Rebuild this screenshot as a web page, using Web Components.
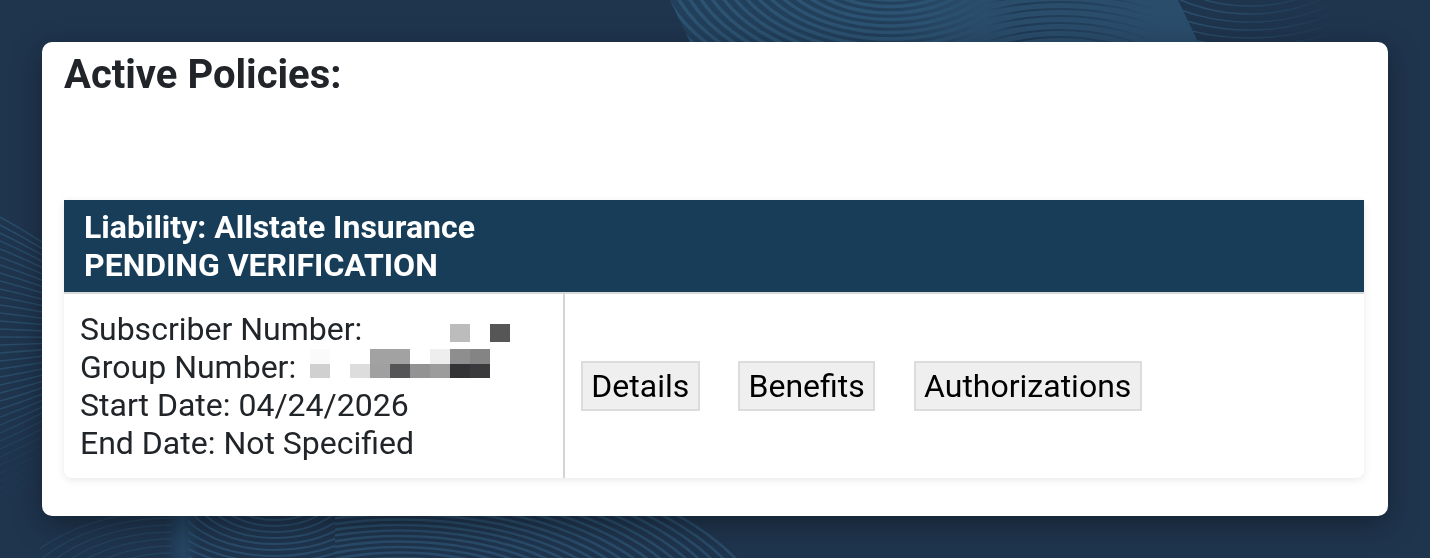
<!DOCTYPE html>
<html lang="en">
<head>
<meta charset="utf-8">
<title>Active Policies</title>
<style>
  html, body { margin: 0; height: 100%; }
  body {
    background: #1f354e;
    font-family: Roboto, "Liberation Sans", sans-serif;
    color: #212529;
    overflow: hidden;
  }
</style>
</head>
<body>
<wave-backdrop></wave-backdrop>
<policy-panel heading="Active Policies:">
  <policy-card>
    <span slot="title">Liability: Allstate Insurance</span>
    <span slot="status">PENDING VERIFICATION</span>
    <div slot="info">Subscriber Number:<pixel-mask class="sub"></pixel-mask></div>
    <div slot="info">Group Number:<pixel-mask class="grp"></pixel-mask></div>
    <div slot="info">Start Date: 04/24/2026</div>
    <div slot="info">End Date: Not Specified</div>
    <action-button slot="actions">Details</action-button>
    <action-button slot="actions">Benefits</action-button>
    <action-button slot="actions">Authorizations</action-button>
  </policy-card>
</policy-panel>

<script>
// --- background: line waves behind the panel ---
class WaveBackdrop extends HTMLElement {
  constructor() {
    super();
    this.attachShadow({ mode: 'open' });
  }

  connectedCallback() {
    this._render();
  }

  // concentric ellipses, k stretches them sideways
  _rings(cx, cy, k, from, to, step) {
    let d = '';
    for (let r = from; r <= to; r += step) {
      d += `M${cx - k * r} ${cy}A${k * r} ${r} 0 1 0 ${cx + k * r} ${cy}A${k * r} ${r} 0 1 0 ${cx - k * r} ${cy}`;
    }
    return d;
  }

  // the fan of lines that shows left of the panel
  _fan() {
    let out = '';
    for (let y0 = 217; y0 <= 500; y0 += 8) {
      const t = (y0 - 217) / 216;
      const slope = t <= 1 ? 0.6 - t * 1.07 : -0.47 - (t - 1) * 0.1;
      const o = y0 < 400 ? 0.75 : Math.max(0.12, 0.75 - (y0 - 400) / 120);
      out += `<path d="M0 ${y0}Q21 ${y0 + slope * 19} 42 ${y0 + slope * 42}" stroke="#2c5372" stroke-width="1.6" fill="none" opacity="${o}"/>`;
    }
    return out;
  }

  _render() {
    this.shadowRoot.innerHTML = `
      <style>
        :host { position: fixed; inset: 0; display: block; }
        svg { display: block; width: 100%; height: 100%; }
      </style>
      <svg viewBox="0 0 1430 558" preserveAspectRatio="none" aria-hidden="true">
        <defs>
          <clipPath id="c1"><path d="M670 0L985 0L985 42L690 42Z"/></clipPath>
          <clipPath id="c2"><path d="M985 0L1178 0L1198 42L985 42Z"/></clipPath>
          <clipPath id="c3"><path d="M1178 0L1330 0L1330 42L1198 42Z"/></clipPath>
          <clipPath id="c4"><path d="M188 516L335 516L335 558L188 558Z"/></clipPath>
          <clipPath id="c5"><path d="M335 516L708 516L745 558L335 558Z"/></clipPath>
          <clipPath id="c6"><path d="M40 516L172 516L172 558L40 558Z"/></clipPath>
          <linearGradient id="bowlTop" gradientUnits="userSpaceOnUse" x1="670" x2="985" y1="0" y2="0">
            <stop offset="0" stop-color="#2c5372"/><stop offset=".8" stop-color="#2c5372"/><stop offset="1" stop-color="#2a4d6c"/>
          </linearGradient>
          <linearGradient id="domeTop" gradientUnits="userSpaceOnUse" x1="985" x2="1160" y1="0" y2="0">
            <stop offset="0" stop-color="#1f3a55" stop-opacity="0"/><stop offset=".2" stop-color="#1f3a55"/><stop offset=".6" stop-color="#1f3a55" stop-opacity=".7"/><stop offset="1" stop-color="#1f3a55" stop-opacity="0"/>
          </linearGradient>
          <linearGradient id="fadeR" gradientUnits="userSpaceOnUse" x1="1175" x2="1330" y1="0" y2="0">
            <stop offset="0" stop-color="#2c5372"/><stop offset="1" stop-color="#2c5372" stop-opacity=".1"/>
          </linearGradient>
          <linearGradient id="fillBowl" gradientUnits="userSpaceOnUse" x1="880" x2="985" y1="0" y2="0">
            <stop offset="0" stop-color="#223f5b"/><stop offset="1" stop-color="#2a4d6c"/>
          </linearGradient>
          <linearGradient id="bandLow" x1="0" x2="1" y1="0" y2="0">
            <stop offset="0" stop-color="#264664" stop-opacity="0"/><stop offset=".5" stop-color="#264664"/><stop offset="1" stop-color="#264664" stop-opacity="0"/>
          </linearGradient>
        </defs>
        <path d="M670 0L985 0L985 42L690 42Z" fill="url(#fillBowl)"/>
        <path d="M985 0L1178 0L1198 42L985 42Z" fill="#2a4d6c"/>
        <g clip-path="url(#c1)" fill="none" stroke="url(#bowlTop)" stroke-width="3.4">
          <path d="${this._rings(890, -50, 1.6, 50, 190, 6.5)}"/>
        </g>
        <g clip-path="url(#c2)" fill="none" stroke="url(#domeTop)" stroke-width="2">
          <path d="${this._rings(1060, 125, 1.6, 60, 130, 7)}"/>
        </g>
        <g clip-path="url(#c3)" fill="none" stroke="url(#fadeR)" stroke-width="1.4">
          <path d="${this._rings(1250, -60, 1.6, 50, 120, 8)}"/>
        </g>
        <g clip-path="url(#c6)" fill="none" stroke="#2a4c6a" stroke-width="1.4" opacity=".55">
          <path d="${this._rings(172, 620, 1.6, 60, 115, 7)}"/>
        </g>
        <rect x="165" y="516" width="36" height="42" fill="url(#bandLow)"/>
        <g clip-path="url(#c4)" fill="none" stroke="#2a4c6a" stroke-width="2">
          <path d="${this._rings(275, 490, 1.7, 30, 100, 6)}"/>
        </g>
        <g clip-path="url(#c5)" fill="none" stroke="#2a4c6a" stroke-width="2.6">
          <path d="${this._rings(400, 640, 2, 60, 191, 5.5)}"/>
        </g>
        ${this._fan()}
      </svg>
    `;
  }
}
customElements.define('wave-backdrop', WaveBackdrop);

// --- White panel with the heading ---
class PolicyPanel extends HTMLElement {
  constructor() {
    super();
    this.attachShadow({ mode: 'open' });
    this.shadowRoot.innerHTML = `
      <style>
        :host {
          position: relative;
          display: block;
          box-sizing: border-box;
          margin: 42px 42px 0;
          height: 474px;
          padding: 11px 24px 0 22px;
          background: #fff;
          border-radius: 10px;
          box-shadow: 0 8px 30px rgba(0,0,0,0.36);
        }
        h2 {
          margin: 0 0 103px;
          font-size: 40px;
          line-height: 44px;
          font-weight: 700;
          color: #212529;
        }
      </style>
      <h2></h2>
      <slot></slot>
    `;
  }

  connectedCallback() {
    this.shadowRoot.querySelector('h2').textContent = this.getAttribute('heading');
  }
}
customElements.define('policy-panel', PolicyPanel);

// --- One policy: blue header, info column, action column ---
class PolicyCard extends HTMLElement {
  constructor() {
    super();
    this.attachShadow({ mode: 'open' });
    this.shadowRoot.innerHTML = `
      <style>
        :host {
          display: block;
          border-radius: 0 0 8px 8px;
          box-shadow: 0 2px 8px rgba(0,0,0,0.09);
          font-size: 32px;
        }
        .head {
          box-sizing: border-box;
          height: 94px;
          padding: 8px 20px 0;
          background: #173d59;
          border-bottom: 2px solid #d8d8d8;
          color: #fff;
          font-weight: 700;
          line-height: 38px;
        }
        .head slot { display: block; }
        .body { display: flex; height: 184px; }
        .info {
          box-sizing: border-box;
          width: 501px;
          padding: 16px 16px 0;
          border-right: 2px solid #d4d4d4;
          line-height: 38px;
          color: #212529;
        }
        .actions {
          flex: 1;
          display: flex;
          align-items: center;
          gap: 38.7px;
          padding: 0 16px;
        }
      </style>
      <div class="head">
        <slot name="title"></slot>
        <slot name="status"></slot>
      </div>
      <div class="body">
        <div class="info"><slot name="info"></slot></div>
        <div class="actions"><slot name="actions"></slot></div>
      </div>
    `;
  }
}
customElements.define('policy-card', PolicyCard);

class ActionButton extends HTMLElement {
  constructor() {
    super();
    this.attachShadow({ mode: 'open' });
    this.shadowRoot.innerHTML = `
      <style>
        :host {
          display: block;
          box-sizing: border-box;
          height: 50px;
          padding: 0 8.3px;
          background: #efefef;
          border: 2px solid #dcdcdc;
          color: #000;
          line-height: 46px;
        }
      </style>
      <slot></slot>
    `;
  }
}
customElements.define('action-button', ActionButton);

// --- Mosaic that hides the policy numbers ---
const MASKS = {
  sub: { left: 88, top: 14, cols: 3, rows: [[18, { 0: '#bcbcbc', 2: '#565656' }]] },
  grp: {
    left: 14,
    top: 1,
    cols: 9,
    rows: [
      [15, { 0: '#fafafa', 3: '#a2a2a2', 4: '#a2a2a2', 6: '#eeeeee', 7: '#8e8e8e', 8: '#848484' }],
      [14, { 0: '#d0d0d0', 2: '#dddddd', 3: '#a0a0a0', 4: '#555558', 5: '#939393', 6: '#9c9c9c', 7: '#333336', 8: '#3a3a3c' }]
    ]
  }
};

class PixelMask extends HTMLElement {
  constructor() {
    super();
    this.attachShadow({ mode: 'open' });
  }

  connectedCallback() {
    const mask = MASKS[this.className];
    const cells = mask.rows.map(([h, row]) => {
      let out = '';
      for (let i = 0; i < mask.cols; i++) {
        out += `<i style="height:${h}px;background:${row[i] || 'transparent'}"></i>`;
      }
      return out;
    }).join('');
    this.shadowRoot.innerHTML = `
      <style>
        :host {
          display: inline-grid;
          grid-template-columns: repeat(${mask.cols}, 20px);
          vertical-align: top;
          margin: ${mask.top}px 0 0 ${mask.left}px;
        }
        i { display: block; }
      </style>
      ${cells}
    `;
  }
}
customElements.define('pixel-mask', PixelMask);
</script>
</body>
</html>
